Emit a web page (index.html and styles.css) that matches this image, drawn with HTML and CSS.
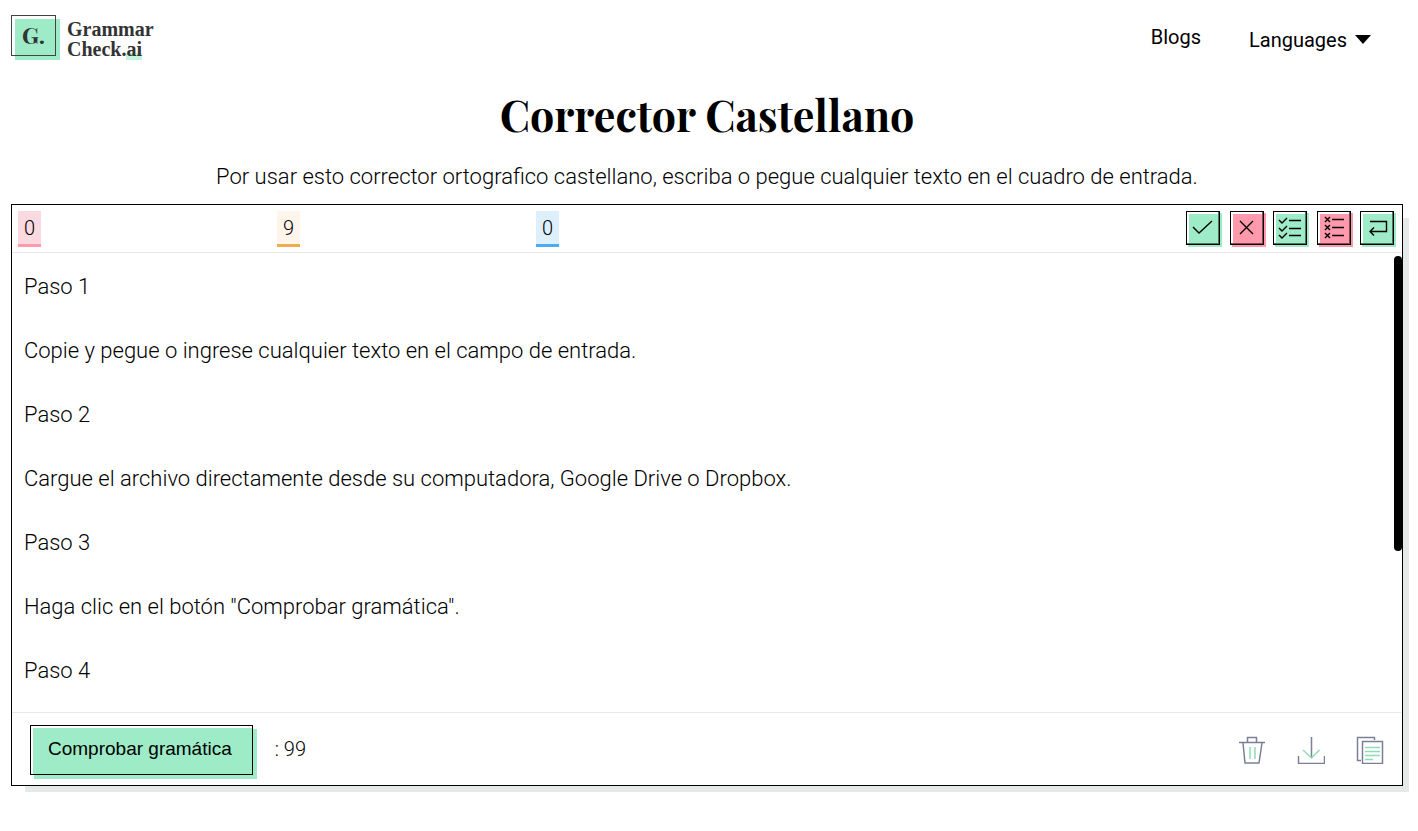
FILE: index.html
```
<!DOCTYPE html>
<html lang="es">
<head>
    <meta charset="UTF-8">
    <meta name="viewport" content="width=device-width, initial-scale=1.0">
    <title>Corrector Castellano</title>
    <link rel="stylesheet" href="styles.css">
</head>
<body>
    <header class="header">
        <a href="#" class="logo">
            <span class="logo-mark">G.</span>
            <span class="logo-name">Grammar<br>Check.<span class="logo-ai">ai</span></span>
        </a>
        <nav class="nav">
            <a href="#" class="nav-link">Blogs</a>
            <button type="button" class="nav-languages">
                Languages
                <svg width="16" height="9" viewBox="0 0 16 9"><path d="M0 0h16L8 9z"/></svg>
            </button>
        </nav>
    </header>

    <main class="main">
        <h1>Corrector Castellano</h1>
        <p class="intro">Por usar esto corrector ortografico castellano, escriba o pegue cualquier texto en el cuadro de entrada.</p>

        <div class="editor">
            <!-- Error counters and actions -->
            <div class="toolbar">
                <div class="counters">
                    <div><span class="counter red">0</span></div>
                    <div><span class="counter orange">9</span></div>
                    <div><span class="counter blue">0</span></div>
                </div>
                <div class="actions">
                    <button type="button" class="action" aria-label="Aceptar">
                        <svg viewBox="0 0 32 32"><path d="M6 15l6 6L25 9"/></svg>
                    </button>
                    <button type="button" class="action pink" aria-label="Rechazar">
                        <svg viewBox="0 0 32 32"><path d="M9 9l13 13M22 9L9 22"/></svg>
                    </button>
                    <button type="button" class="action" aria-label="Aceptar todo">
                        <svg viewBox="0 0 32 32"><path d="M5 8l3 3 5-5M5 16l3 3 5-5M5 23l3 3 5-5M15 8.500h12M15 16.500h12M15 23.500h12"/></svg>
                    </button>
                    <button type="button" class="action pink" aria-label="Rechazar todo">
                        <svg viewBox="0 0 32 32"><path d="M7 5l5 5M12 5l-5 5M7 13l5 5M12 13l-5 5M7 21l5 5M12 21l-5 5M14 7.500h12M14 15.500h12M14 23.500h12"/></svg>
                    </button>
                    <button type="button" class="action" aria-label="Deshacer">
                        <svg viewBox="0 0 32 32"><path d="M9 9.500h16.500v10H9M13 15.500l-4 4 4 4"/></svg>
                    </button>
                </div>
            </div>

            <!-- Text input -->
            <div class="text-wrap">
                <textarea class="text" aria-label="Texto" spellcheck="false">Paso 1

Copie y pegue o ingrese cualquier texto en el campo de entrada.

Paso 2

Cargue el archivo directamente desde su computadora, Google Drive o Dropbox.

Paso 3

Haga clic en el botón "Comprobar gramática".

Paso 4</textarea>
                <div class="thumb"></div>
            </div>

            <!-- Submit row -->
            <div class="bottom">
                <button type="button" class="check">Comprobar gramática</button>
                <span class="words">: 99</span>
                <div class="tools">
                    <button type="button" class="tool" aria-label="Borrar">
                        <svg width="28" height="28" viewBox="0 0 28 28"><path d="M1 6.500h26M9.500 6V1.500h9V6M5 7l2 20h14l3-20"/><path class="green" d="M12 11v12M17 11v12"/></svg>
                    </button>
                    <button type="button" class="tool" aria-label="Descargar">
                        <svg width="28" height="28" viewBox="0 0 28 28"><path d="M14.500 1v21M1.500 20v7.500h26V20"/><path class="green" d="M6 14l8.500 8 8-8"/></svg>
                    </button>
                    <button type="button" class="tool" aria-label="Copiar">
                        <svg width="28" height="28" viewBox="0 0 28 28"><path d="M18.500 4V1.500h-17v23H5M6.500 5.500h20v22h-20z"/><path class="green" d="M9 11.500h15M9 15.500h15M9 19.500h15M9 23.500h8"/></svg>
                    </button>
                </div>
            </div>
        </div>
    </main>
</body>
</html>
```
FILE: styles.css
```
* {
    box-sizing: border-box;
}
body {
    margin: 0;
    padding: 0 15px 39px 11px;
    font-family: Roboto, Arial, sans-serif;
    font-weight: 300;
    color: #000;
    background-color: #fff;
}
button {
    font-family: inherit;
    font-weight: inherit;
    color: inherit;
    cursor: pointer;
}
.header {
    display: flex;
    justify-content: space-between;
    align-items: center;
    padding-top: 11px;
}
.logo {
    display: flex;
    align-items: center;
    gap: 11px;
    color: #333;
    font-family: "Liberation Serif", serif;
    font-weight: bold;
    text-decoration: none;
}
.logo-mark {
    width: 45px;
    height: 41px;
    border: 1px solid #444;
    background-color: #9eebc8;
    box-shadow: inset 3px 3px #fff, 4px 4px #9eebc8;
    font-family: "Playfair Display", "Liberation Serif", serif;
    font-size: 23px;
    line-height: 38px;
    text-align: center;
}
.logo-name {
    padding-top: 8px;
    font-size: 20px;
    line-height: 20px;
}
.logo-ai {
    background: linear-gradient(transparent 70%, #c4f3de 70%);
}
.nav {
    display: flex;
    align-items: center;
    gap: 48px;
    padding: 3px 32px 0 0;
    font-weight: 400;
}
.nav-link {
    color: #000;
    font-size: 20px;
    text-decoration: none;
}
.nav-languages {
    display: flex;
    align-items: center;
    gap: 8px;
    padding: 6px 0 0;
    border: none;
    background: none;
    font-size: 20px;
}
h1 {
    margin: 28px 0 0;
    font-family: "Playfair Display", "Liberation Serif", serif;
    font-size: 43px;
    line-height: 54px;
    text-align: center;
}
.intro {
    margin: 20px 0 11px;
    font-size: 22px;
    line-height: 32px;
    text-align: center;
}
.editor {
    border: 1px solid #000;
    background-color: #fff;
    box-shadow: 10px 10px 0 -4px #e5e9e8;
}
.toolbar {
    display: flex;
    justify-content: space-between;
    padding: 6px 8px 5px 6px;
    border-bottom: 1px solid #e8e8e8;
}
.counters {
    display: grid;
    grid-template-columns: repeat(3, 259px);
}
.counter {
    display: inline-block;
    padding: 1px 6px 0;
    border-bottom: 3px solid;
    font-size: 20px;
    line-height: 32px;
}
.red {
    background-color: #fadae0;
    border-color: #ff99ab;
}
.orange {
    background-color: #fff5ea;
    border-color: #f0ad4e;
}
.blue {
    background-color: #deeffc;
    border-color: #4aacf0;
}
.actions {
    display: flex;
    justify-content: space-between;
    width: 208px;
}
.action {
    width: 34px;
    height: 34px;
    padding: 0;
    border: 1px solid #000;
    background-color: #9eebc8;
    box-shadow: inset -1px -1px #4f7564, inset 2px 2px #fff, 2px 2px #9eebc8;
}
.action.pink {
    background-color: #ff99ab;
    box-shadow: inset -1px -1px #804d56, inset 2px 2px #fff, 2px 2px #ff99ab;
}
.action svg {
    display: block;
    fill: none;
    stroke: #000;
    stroke-width: 1.4;
}
.text-wrap {
    position: relative;
}
.text {
    display: block;
    width: 100%;
    height: 459px;
    padding: 18px 24px 0 12px;
    border: none;
    outline: none;
    resize: none;
    overflow: hidden;
    color: #000;
    background: none;
    font-family: inherit;
    font-weight: inherit;
    font-size: 22px;
    line-height: 32px;
}
.thumb {
    position: absolute;
    top: 3px;
    right: 0;
    width: 8px;
    height: 295px;
    border-radius: 4px;
    background-color: #000;
}
.bottom {
    display: flex;
    align-items: center;
    padding: 12px 18px 10px;
    border-top: 1px solid #e8e8e8;
}
.check {
    height: 50px;
    padding: 0 20px 2px 17px;
    border: 1px solid #000;
    background-color: #9eebc8;
    box-shadow: inset 2px 2px #fff, 4px 4px #9eebc8;
    font-family: "Liberation Sans", Arial, sans-serif;
    font-size: 19px;
}
.words {
    padding-bottom: 3px;
    margin-left: 22px;
    font-size: 20px;
}
.tools {
    display: flex;
    gap: 31px;
    margin-left: auto;
}
.tool {
    padding: 0;
    border: none;
    background: none;
}
.tool svg {
    display: block;
    fill: none;
    stroke: #7b8097;
    stroke-width: 1.5;
}
.tool .green {
    stroke: #8fdcb9;
}
```
